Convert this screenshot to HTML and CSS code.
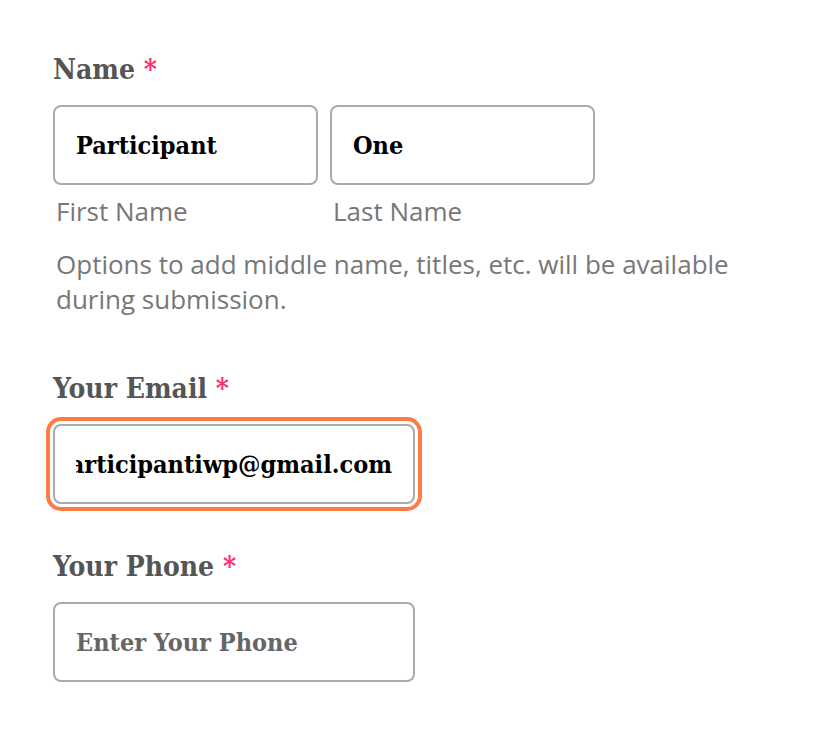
FILE: index.html
```html
<!DOCTYPE html>
<html lang="en">
  <head>
    <title>Registration</title>
    <meta charset="UTF-8" />
    <meta name="viewport" content="width=device-width" />
    <link rel="stylesheet" href="styles.css">
  </head>
  <body>
    <!-- Participant details form -->
    <form class="reg-form">
      <!-- Name: first + last -->
      <div class="field">
        <label class="field-label">Name <span class="req">*</span></label>
        <div class="name-row">
          <div class="name-part">
            <input type="text" class="input-field" value="Participant" />
            <span class="sub-label">First Name</span>
          </div>
          <div class="name-part">
            <input type="text" class="input-field" value="One" />
            <span class="sub-label">Last Name</span>
          </div>
        </div>
        <p class="help">Options to add middle name, titles, etc. will be available during submission.</p>
      </div>

      <!-- Email (focused) -->
      <div class="field">
        <label class="field-label" for="email">Your Email <span class="req">*</span></label>
        <input type="email" id="email" class="input-field wide is-focused" value="participantiwp@gmail.com" />
      </div>

      <!-- Phone -->
      <div class="field">
        <label class="field-label" for="phone">Your Phone <span class="req">*</span></label>
        <input type="tel" id="phone" class="input-field wide" placeholder="Enter Your Phone" />
      </div>
    </form>
  </body>
</html>
```

FILE: styles.css
```css
* {
  box-sizing: border-box;
}

body {
  margin: 0;
  background-color: #fff;
  font-family: "DejaVu Serif Condensed", "DejaVu Serif", serif;
  color: #555;
}

/* form column */
.reg-form {
  padding: 52px 0 0 53px;
  display: flex;
  flex-direction: column;
  gap: 45px;
}

.field {
  display: flex;
  flex-direction: column;
}

.field-label {
  font-size: 28px;
  font-weight: bold;
  line-height: 36px;
  color: #555;
  margin-bottom: 17px;
}

.req {
  color: #ff2d6b;
}

/* first / last name side by side */
.name-row {
  display: flex;
  gap: 12px;
}

.name-part {
  display: flex;
  flex-direction: column;
  width: 265px;
}

.input-field {
  font-family: "DejaVu Serif Condensed", "DejaVu Serif", serif;
  font-size: 25px;
  font-weight: bold;
  color: #000;
  height: 80px;
  padding: 0 21px 0 21px;
  border: 2px solid #aaa;
  border-radius: 8px;
  background: #fff;
  outline: none;
}

.input-field::placeholder {
  color: #666;
  font-weight: 600;
}

.wide {
  width: 362px;
}

/* show the tail of the typed address, like a scrolled field */
.is-focused {
  direction: rtl;
  outline: 4px solid #ff7a45;
  outline-offset: 3px;
}

.sub-label,
.help {
  font-family: "Open Sans", sans-serif;
  font-size: 26px;
  color: #777;
}

.sub-label {
  line-height: 34px;
  margin: 9px 0 0 3px;
}

.help {
  line-height: 35px;
  margin: 19px 0 9px 3px;
  max-width: 700px;
}
```
